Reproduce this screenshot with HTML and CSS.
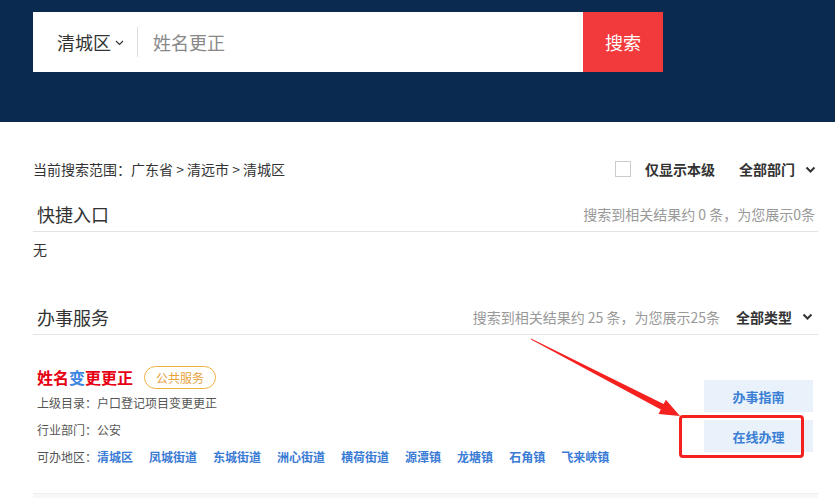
FILE: index.html
```html
<!DOCTYPE html>
<html lang="zh-CN">
<head>
<meta charset="utf-8">
<title>搜索</title>
<link rel="stylesheet" href="styles.css">
</head>
<body>
<div class="header">
  <div class="search">
    <div class="search-box">
      <div class="region">清城区<svg class="chev-sm" width="9" height="6" viewBox="0 0 9 6"><path d="M1 1 L4.5 4.5 L8 1" fill="none" stroke="#333" stroke-width="1.2"/></svg></div>
      <div class="sep"></div>
      <div class="query">姓名更正</div>
    </div>
    <div class="search-btn">搜索</div>
  </div>
</div>

<div class="main">
  <div class="scope-row">
    <div class="scope">当前搜索范围：广东省 &gt; 清远市 &gt; 清城区</div>
    <div class="filters">
      <span class="checkbox"></span>
      <span class="filter-label">仅显示本级</span>
      <span class="filter-select">全部部门<svg class="chev" width="11" height="7" viewBox="0 0 11 7"><path d="M1.5 1.5 L5.5 5.5 L9.5 1.5" fill="none" stroke="#333" stroke-width="2"/></svg></span>
    </div>
  </div>

  <div class="sec-head first">
    <div class="sec-title">快捷入口</div>
    <div class="sec-right"><span class="count">搜索到相关结果约 0 条，为您展示0条</span></div>
  </div>
  <div class="empty">无</div>

  <div class="sec-head second">
    <div class="sec-title">办事服务</div>
    <div class="sec-right"><span class="count">搜索到相关结果约 25 条，为您展示25条</span><span class="filter-select type">全部类型<svg class="chev" width="11" height="7" viewBox="0 0 11 7"><path d="M1.5 1.5 L5.5 5.5 L9.5 1.5" fill="none" stroke="#333" stroke-width="2"/></svg></span></div>
  </div>

  <div class="item">
    <div class="item-info">
      <div class="item-title"><span class="hl">姓名</span><span class="blue">变</span><span class="hl">更更正</span><span class="badge">公共服务</span></div>
      <div class="meta">上级目录：户口登记项目变更更正</div>
      <div class="meta">行业部门：公安</div>
      <div class="meta">可办地区：<a class="area">清城区</a><a class="area">凤城街道</a><a class="area">东城街道</a><a class="area">洲心街道</a><a class="area">横荷街道</a><a class="area">源潭镇</a><a class="area">龙塘镇</a><a class="area">石角镇</a><a class="area">飞来峡镇</a></div>
    </div>
    <div class="actions">
      <div class="act">办事指南</div>
      <div class="act">在线办理</div>
    </div>
  </div>
</div>
<div class="next"></div>

<svg class="arrow" width="835" height="498" viewBox="0 0 835 498">
  <polygon points="531,338.4 663.6,404.1 665.9,399.7 680,416 658.5,413.9 660.8,409.5 531,339.6" fill="#f5211f"/>
</svg>
<div class="highlight"></div>
</body>
</html>
```

FILE: styles.css
```css
* { box-sizing: border-box; }
body {
  margin: 0;
  font-family: "Noto Sans CJK SC", "Microsoft YaHei", sans-serif;
  color: #333;
  background: #fff;
  width: 835px;
  height: 498px;
  overflow: hidden;
  position: relative;
}
.header {
  height: 122px;
  background: #0b2a4f;
  padding: 12px 0 0 33px;
}
.search {
  display: flex;
  width: 630px;
  height: 60px;
}
.search-box {
  flex: 1;
  background: #fff;
  display: flex;
  align-items: center;
  padding-left: 24px;
}
.region {
  font-size: 18px;
  color: #333;
  display: flex;
  align-items: center;
  line-height: 24px;
}
.chev-sm { margin-left: 4px; margin-top: 2px; }
.sep {
  width: 1px;
  height: 30px;
  background: #ddd;
  margin-left: 13px;
}
.query {
  margin-left: 15px;
  font-size: 18px;
  color: #888;
  line-height: 24px;
}
.search-btn {
  width: 80px;
  background: #f23a3c;
  color: #fff;
  font-size: 18px;
  display: flex;
  align-items: center;
  justify-content: center;
}
.main {
  padding: 37px 17px 0 33px;
}
.scope-row {
  display: flex;
  justify-content: space-between;
  align-items: center;
  height: 20px;
}
.scope { font-size: 14px; color: #333; }
.filters {
  display: flex;
  align-items: center;
  font-size: 14px;
  font-weight: bold;
}
.checkbox {
  width: 16px;
  height: 16px;
  border: 1px solid #ccc;
  background: #fff;
  margin-right: 14px;
}
.filter-label { margin-right: 24px; }
.filter-select {
  display: flex;
  align-items: center;
  font-size: 14px;
  font-weight: bold;
  color: #333;
}
.chev { margin-left: 10px; margin-right: 2px; }
.sec-head {
  display: flex;
  justify-content: space-between;
  align-items: center;
  height: 36px;
  border-bottom: 1px solid #e3e3e3;
}
.sec-head.first { margin-top: 17px; }
.sec-head.second { margin-top: 38px; }
.sec-title {
  font-size: 18px;
  color: #333;
  padding-left: 4px;
}
.sec-right {
  display: flex;
  align-items: center;
}
.count {
  font-size: 14px;
  color: #999;
  padding-right: 3px;
}
.filter-select.type { margin-left: 13px; }
.filter-select.type .chev { margin-left: 10px; margin-right: 5px; }
.empty {
  font-size: 14px;
  line-height: 24px;
  margin-top: 5px;
}
.item {
  display: flex;
  justify-content: space-between;
  padding: 30px 5px 23px 4px;
  border-bottom: 1px solid #eee;
}
.item-title {
  display: flex;
  align-items: center;
  height: 24px;
  font-size: 16px;
  font-weight: bold;
}
.hl { color: #e60012; }
.blue { color: #3d86e0; }
.badge {
  margin-left: 11px;
  height: 23px;
  padding: 0 11px;
  border: 1px solid #f0b23f;
  border-radius: 12px;
  font-size: 12px;
  font-weight: normal;
  color: #e9a23b;
  display: flex;
  align-items: center;
}
.meta {
  font-size: 12px;
  color: #555;
  line-height: 27px;
}
.meta:first-of-type { margin-top: 2px; }
.area {
  color: #3a7bd5;
  font-weight: bold;
  margin-right: 16px;
}
.actions {
  display: flex;
  flex-direction: column;
  gap: 8px;
  margin-top: 15px;
  width: 109px;
}
.act {
  height: 32px;
  background: #e9f2fb;
  color: #3b7fd4;
  font-size: 13px;
  font-weight: bold;
  display: flex;
  align-items: center;
  justify-content: center;
}
.next {
  height: 10px;
  margin: 0 17px 0 33px;
  background: #f8f8f8;
}
.arrow {
  position: absolute;
  left: 0;
  top: 0;
  pointer-events: none;
}
.highlight {
  position: absolute;
  left: 679px;
  top: 415px;
  width: 125px;
  height: 43px;
  border: 3px solid #f5211f;
  border-radius: 4px;
}
```
